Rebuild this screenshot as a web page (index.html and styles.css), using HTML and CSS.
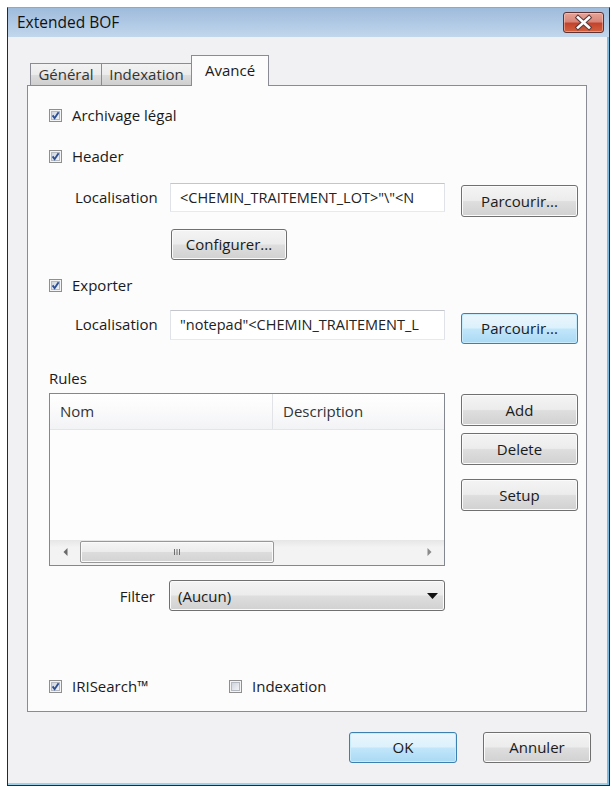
FILE: index.html
```html
<!DOCTYPE html>
<html>
<head>
<meta charset="utf-8">
<title>Extended BOF</title>
<link rel="stylesheet" href="styles.css">
</head>
<body>
<div class="window">
  <div class="titlebar">
    <span class="title">Extended BOF</span>
    <div class="close">
      <svg width="41" height="21" viewBox="0 0 41 21">
        <path d="M15 5.5 L26 15.5 M26 5.5 L15 15.5" stroke="#5b3b3b" stroke-width="4.6" stroke-linecap="square" fill="none"/>
        <path d="M15 5.5 L26 15.5 M26 5.5 L15 15.5" stroke="#ffffff" stroke-width="2.6" stroke-linecap="square" fill="none"/>
      </svg>
    </div>
  </div>
  <div class="client">
    <div class="tabs">
      <div class="tab t1">Général</div>
      <div class="tab t2">Indexation</div>
      <div class="tab sel">Avancé</div>
    </div>
    <div class="panel">
      <div class="chk r-arch">
        <svg class="box" width="13" height="13" viewBox="0 0 13 13"><defs><linearGradient id="g1" x1="0" y1="0" x2="1" y2="1"><stop offset="0" stop-color="#cdd2db"/><stop offset="1" stop-color="#f5f6f8"/></linearGradient></defs><rect x="0.5" y="0.5" width="12" height="12" fill="#f4f4f4" stroke="#8f8f8f"/><rect x="2.5" y="2.5" width="8" height="8" fill="url(#g1)" stroke="#b3b8c1"/><path d="M3.6 6.4 L5.6 9.2 L9.6 3.2" stroke="#2c4f96" stroke-width="1.9" fill="none"/></svg>
        <span>Archivage légal</span>
      </div>
      <div class="chk r-head">
        <svg class="box" width="13" height="13" viewBox="0 0 13 13"><rect x="0.5" y="0.5" width="12" height="12" fill="#f4f4f4" stroke="#8f8f8f"/><rect x="2.5" y="2.5" width="8" height="8" fill="url(#g1)" stroke="#b3b8c1"/><path d="M3.6 6.4 L5.6 9.2 L9.6 3.2" stroke="#2c4f96" stroke-width="1.9" fill="none"/></svg>
        <span>Header</span>
      </div>
      <div class="loc r-loc1">
        <span class="lbl">Localisation</span>
        <div class="field"><span>&lt;CHEMIN_TRAITEMENT_LOT&gt;"\"&lt;N</span></div>
        <div class="btn browse">Parcourir...</div>
      </div>
      <div class="btn conf">Configurer...</div>
      <div class="chk r-exp">
        <svg class="box" width="13" height="13" viewBox="0 0 13 13"><rect x="0.5" y="0.5" width="12" height="12" fill="#f4f4f4" stroke="#8f8f8f"/><rect x="2.5" y="2.5" width="8" height="8" fill="url(#g1)" stroke="#b3b8c1"/><path d="M3.6 6.4 L5.6 9.2 L9.6 3.2" stroke="#2c4f96" stroke-width="1.9" fill="none"/></svg>
        <span>Exporter</span>
      </div>
      <div class="loc r-loc2">
        <span class="lbl">Localisation</span>
        <div class="field f2"><span>"notepad"&lt;CHEMIN_TRAITEMENT_L</span></div>
        <div class="btn browse b2 default">Parcourir...</div>
      </div>
      <div class="rules-lbl">Rules</div>
      <div class="listrow">
        <div class="list">
          <div class="lhead">
            <div class="col c1">Nom</div>
            <div class="col c2">Description</div>
          </div>
          <div class="lbody"></div>
          <div class="hscroll">
            <div class="arrow left"><svg width="5" height="8" viewBox="0 0 5 8"><path d="M4.5 0 L0.5 4 L4.5 8 Z" fill="#6a6a6a"/></svg></div>
            <div class="thumb">
              <svg width="8" height="8" viewBox="0 0 8 8"><path d="M1.5 1 V7 M4 1 V7 M6.5 1 V7" stroke="#6e6e6e" stroke-width="1"/></svg>
            </div>
            <div class="track"></div>
            <div class="arrow right"><svg width="5" height="8" viewBox="0 0 5 8"><path d="M0.5 0 L4.5 4 L0.5 8 Z" fill="#8a8a8a"/></svg></div>
          </div>
        </div>
        <div class="sidebtns">
          <div class="btn side add">Add</div>
          <div class="btn side del">Delete</div>
          <div class="btn side setup">Setup</div>
        </div>
      </div>
      <div class="filterrow">
        <span class="flbl">Filter</span>
        <div class="combo">
          <span>(Aucun)</span>
          <svg width="11" height="6" viewBox="0 0 11 6"><path d="M0 0 H11 L5.5 6 Z" fill="#111"/></svg>
        </div>
      </div>
      <div class="bottomchecks">
        <div class="chk w180">
          <svg class="box" width="13" height="13" viewBox="0 0 13 13"><rect x="0.5" y="0.5" width="12" height="12" fill="#f4f4f4" stroke="#8f8f8f"/><rect x="2.5" y="2.5" width="8" height="8" fill="url(#g1)" stroke="#b3b8c1"/><path d="M3.6 6.4 L5.6 9.2 L9.6 3.2" stroke="#2c4f96" stroke-width="1.9" fill="none"/></svg>
          <span>IRISearch™</span>
        </div>
        <div class="chk nomargin">
          <svg class="box" width="13" height="13" viewBox="0 0 13 13"><rect x="0.5" y="0.5" width="12" height="12" fill="#f4f4f4" stroke="#8f8f8f"/><rect x="2.5" y="2.5" width="8" height="8" fill="url(#g1)" stroke="#b3b8c1"/></svg>
          <span>Indexation</span>
        </div>
      </div>
    </div>
    <div class="dlgbtns">
      <div class="btn dlg default">OK</div>
      <div class="btn dlg cancel">Annuler</div>
    </div>
  </div>
</div>
</body>
</html>
```

FILE: styles.css
```css
* { box-sizing: border-box; }
html, body { margin: 0; padding: 0; background: #ffffff; }
body {
  font-family: "Open Sans", "Noto Sans", sans-serif;
  font-size: 15px;
  color: #1a1a1a;
}
.window {
  margin: 7px 0 0 7px;
  width: 603px;
  height: 779px;
  border: 1px solid #1f2b38;
  border-top-color: #8ea8c6;
  background: #f1f0f3;
  box-shadow: inset -2px 0 0 #7fbbe0, inset 0 -2px 0 #9fd0ea;
  display: flex;
  flex-direction: column;
}
.titlebar {
  height: 29px;
  flex: none;
  display: flex;
  justify-content: space-between;
  align-items: flex-start;
  background: linear-gradient(to bottom, #9fbbdc 0%, #afc8e4 50%, #c2d7ec 100%);
}
.title {
  padding-left: 9px;
  line-height: 29px;
  font-size: 15.5px;
  color: #111;
}
.close {
  margin-top: 4px;
  margin-right: 5px;
  width: 41px;
  height: 21px;
  border: 1px solid #5e3232;
  border-radius: 3px;
  background: linear-gradient(to bottom, #e6a496 0%, #d9867a 45%, #c4432c 55%, #d2623f 100%);
  box-shadow: inset 0 0 0 1px rgba(255,220,210,0.45);
  overflow: hidden;
}
.close svg { display: block; margin: -1px 0 0 -1px; }
.client {
  flex: 1;
  padding: 18px 0 0 19px;
  display: flex;
  flex-direction: column;
}
.tabs {
  height: 30px;
  display: flex;
  align-items: flex-end;
  padding-left: 3px;
  position: relative;
  z-index: 2;
}
.tab {
  height: 22px;
  border: 1px solid #898c95;
  border-bottom: none;
  background: linear-gradient(to bottom, #f3f3f3 0%, #ebebeb 50%, #dddddd 51%, #cfcfcf 100%);
  text-align: center;
  line-height: 21px;
  color: #333;
}
.t1 { width: 72px; }
.t2 { width: 91px; margin-left: -1px; }
.sel {
  width: 78px;
  height: 31px;
  margin-left: -1px;
  margin-bottom: -1px;
  background: #fcfcfc;
  line-height: 28px;
  color: #1a1a1a;
}
.panel {
  width: 560px;
  height: 627px;
  border: 1px solid #898c95;
  background: #fcfcfc;
  position: relative;
  z-index: 1;
  display: flex;
  flex-direction: column;
  align-items: flex-start;
}
.chk {
  display: flex;
  align-items: center;
  height: 18px;
  margin-left: 21px;
}
.chk .box { flex: none; margin-right: 10px; display: block; }
.r-arch { margin-top: 20px; }
.r-head { margin-top: 23px; }
.r-exp { margin-top: 16px; }
.loc {
  display: flex;
  align-items: flex-start;
  height: 34px;
}
.r-loc1 { margin-top: 18px; }
.r-loc2 { margin-top: 16px; }
.lbl {
  width: 95px;
  margin-left: 47px;
  line-height: 28px;
}
.field {
  width: 275px;
  height: 29px;
  border: 1px solid;
  border-color: #c3c6cc #dfe2e8 #e6eaef #dfe2e8;
  background: #ffffff;
  padding: 0 4px 0 9px;
  overflow: hidden;
  white-space: nowrap;
  line-height: 27px;
  font-size: 14.5px;
  color: #222;
}
.field span { display: block; overflow: hidden; }
.f2 { height: 30px; line-height: 28px; }
.btn {
  border: 1px solid #707070;
  border-radius: 3px;
  background: linear-gradient(to bottom, #f4f4f4 0%, #ececec 48%, #dedede 52%, #d1d1d1 100%);
  box-shadow: inset 0 0 0 1px #fbfbfb;
  text-align: center;
  color: #1a1a1a;
}
.btn.default {
  border-color: #3c7fb1;
  background: linear-gradient(to bottom, #ebf6fd 0%, #dcf1fc 48%, #c1e6fb 52%, #aad9f4 100%);
  box-shadow: inset 0 0 0 1px #c9ecfd;
}
.browse {
  width: 117px;
  height: 32px;
  margin-left: 16px;
  margin-top: 2px;
  line-height: 30px;
}
.b2 { margin-top: 3px; height: 31px; line-height: 29px; }
.conf {
  width: 116px;
  height: 31px;
  margin-top: 12px;
  margin-left: 143px;
  line-height: 29px;
}
.rules-lbl {
  margin-top: 26px;
  margin-left: 21px;
  line-height: 16px;
}
.listrow {
  margin-top: 7px;
  display: flex;
  align-items: flex-start;
  height: 173px;
}
.list {
  margin-left: 21px;
  width: 396px;
  height: 173px;
  border: 1px solid #828790;
  background: #fdfdfd;
  display: flex;
  flex-direction: column;
}
.lhead {
  height: 36px;
  flex: none;
  display: flex;
  background: linear-gradient(to bottom, #ffffff 0%, #fafafb 50%, #f2f3f5 100%);
  border-bottom: 1px solid #e3e5e9;
}
.col { line-height: 35px; padding-left: 10px; color: #333; }
.c1 { width: 223px; border-right: 1px solid #e2e3e6; }
.c2 { flex: 1; }
.lbody { flex: 1; }
.hscroll {
  height: 25px;
  flex: none;
  display: flex;
  align-items: center;
  background: linear-gradient(to bottom, #e6e6e6 0%, #f3f3f3 30%, #f3f3f3 100%);
  padding-bottom: 2px;
}
.arrow {
  width: 30px;
  height: 22px;
  display: flex;
  align-items: center;
  justify-content: center;
}
.arrow svg { display: block; }
.thumb {
  width: 194px;
  height: 22px;
  border: 1px solid #989898;
  border-radius: 2px;
  background: linear-gradient(to bottom, #f5f5f5 0%, #ececec 48%, #dcdcdc 52%, #d3d3d3 100%);
  box-shadow: inset 0 0 0 1px #fafafa;
  display: flex;
  align-items: center;
  justify-content: center;
}
.thumb svg { display: block; }
.track { flex: 1; }
.sidebtns {
  margin-left: 16px;
  display: flex;
  flex-direction: column;
}
.side {
  width: 117px;
  height: 32px;
  line-height: 30px;
}
.add { margin-top: 1px; }
.del { margin-top: 7px; }
.setup { margin-top: 14px; }
.filterrow {
  margin-top: 14px;
  display: flex;
  align-items: center;
  height: 31px;
}
.flbl {
  width: 127px;
  text-align: right;
}
.combo {
  margin-left: 14px;
  width: 276px;
  height: 31px;
  border: 1px solid #707070;
  border-radius: 3px;
  background: linear-gradient(to bottom, #f4f4f4 0%, #ececec 48%, #dedede 52%, #d1d1d1 100%);
  box-shadow: inset 0 0 0 1px #fbfbfb;
  display: flex;
  align-items: center;
  justify-content: space-between;
  padding: 0 6px 0 8px;
}
.combo svg { display: block; }
.bottomchecks {
  margin-top: 66px;
  display: flex;
}
.w180 { width: 180px; }
.nomargin { margin-left: 0; }
.dlgbtns {
  margin-top: 20px;
  width: 564px;
  display: flex;
  justify-content: flex-end;
}
.dlg {
  width: 108px;
  height: 31px;
  line-height: 29px;
}
.cancel { margin-left: 26px; }
```
